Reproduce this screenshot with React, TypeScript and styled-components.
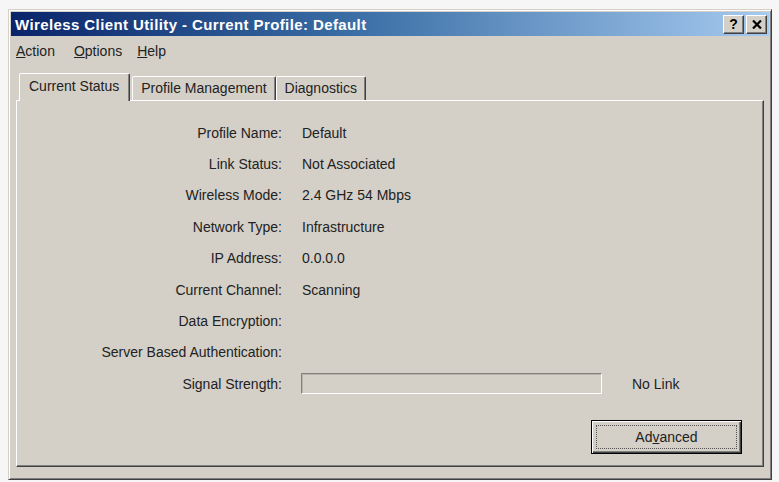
import React from 'react'
import styled, { createGlobalStyle, css } from 'styled-components'

const GlobalStyle = createGlobalStyle`
  html, body {
    margin: 0;
    padding: 0;
    background: #f6f6f6;
  }
  body {
    font-family: "Liberation Sans", Arial, sans-serif;
    font-size: 14px;
    color: #222;
  }
`

const face = '#d4d0c8'

const rows: { label: string; value?: string }[] = [
  { label: 'Profile Name:', value: 'Default' },
  { label: 'Link Status:', value: 'Not Associated' },
  { label: 'Wireless Mode:', value: '2.4 GHz 54 Mbps' },
  { label: 'Network Type:', value: 'Infrastructure' },
  { label: 'IP Address:', value: '0.0.0.0' },
  { label: 'Current Channel:', value: 'Scanning' },
  { label: 'Data Encryption:' },
  { label: 'Server Based Authentication:' }
]

const tabs = ['Current Status', 'Profile Management', 'Diagnostics']

const App: React.FC = () => {
  return (
    <>
      <GlobalStyle />
      <Window>
        <TitleBar>
          <Title>Wireless Client Utility - Current Profile: Default</Title>
          <CaptionButtons>
            <CaptionButton>?</CaptionButton>
            <CaptionButton>
              <svg width="10" height="9" viewBox="0 0 10 9">
                <path d="M1 0.5 L9 8.5 M9 0.5 L1 8.5" stroke="#000" strokeWidth="2.2" />
              </svg>
            </CaptionButton>
          </CaptionButtons>
        </TitleBar>

        <MenuBar>
          <MenuItem>
            <u>A</u>ction
          </MenuItem>
          <MenuItem>
            <u>O</u>ptions
          </MenuItem>
          <MenuItem>
            <u>H</u>elp
          </MenuItem>
        </MenuBar>

        <Body>
          <TabStrip>
            {tabs.map((t, i) => (
              <Tab key={t} $active={i === 0}>
                {t}
              </Tab>
            ))}
          </TabStrip>

          <TabPanel>
            <InfoGrid>
              {rows.map((r) => (
                <React.Fragment key={r.label}>
                  <Label>{r.label}</Label>
                  <Value>{r.value ?? ''}</Value>
                </React.Fragment>
              ))}
              <Label>Signal Strength:</Label>
              <SignalCell>
                <SignalBar />
                <SignalText>No Link</SignalText>
              </SignalCell>
            </InfoGrid>

            <ButtonRow>
              <DefaultButton>
                <FocusRect>
                  Ad<u>v</u>anced
                </FocusRect>
              </DefaultButton>
            </ButtonRow>
          </TabPanel>
        </Body>
      </Window>
    </>
  )
}

const Window = styled.div`
  box-sizing: border-box;
  margin: 9px 0 0 8px;
  width: 764px;
  height: 471px;
  background: ${face};
  border: 1px solid;
  border-color: ${face} #404040 #404040 ${face};
  box-shadow: inset 1px 1px 0 #fff, inset -1px -1px 0 #808080;
  padding: 2px;
  display: flex;
  flex-direction: column;
`

const TitleBar = styled.div`
  height: 24px;
  display: flex;
  align-items: center;
  justify-content: space-between;
  padding: 0 2px 0 4px;
  background: linear-gradient(to right, #0a246a 0%, #3a6ea5 45%, #a6caf0 100%);
`

const Title = styled.div`
  color: #fff;
  font-weight: bold;
  font-size: 15px;
  letter-spacing: 0.4px;
  white-space: nowrap;
`

const CaptionButtons = styled.div`
  display: flex;
  gap: 2px;
`

const CaptionButton = styled.div`
  box-sizing: border-box;
  width: 21px;
  height: 19px;
  display: flex;
  align-items: center;
  justify-content: center;
  background: ${face};
  border: 1px solid;
  border-color: #fff #404040 #404040 #fff;
  box-shadow: inset -1px -1px 0 #808080;
  font-weight: bold;
  font-size: 14px;
  color: #000;
  line-height: 1;
`

const MenuBar = styled.div`
  height: 26px;
  display: flex;
  align-items: flex-start;
  padding: 7px 0 0 5px;
  box-sizing: border-box;
  gap: 19px;
`

const MenuItem = styled.span`
  line-height: 16px;
  color: #222;
  &:last-child {
    margin-left: -4px;
  }
`

const Body = styled.div`
  flex: 1;
  display: flex;
  flex-direction: column;
  padding: 11px 5px 10px 5px;
`

const TabStrip = styled.div`
  display: flex;
  align-items: flex-end;
  padding-left: 3px;
  height: 27px;
  position: relative;
  z-index: 1;
`

const Tab = styled.div<{ $active?: boolean }>`
  box-sizing: border-box;
  height: 24px;
  line-height: 22px;
  padding: 0 8px;
  background: ${face};
  border: 1px solid;
  border-bottom: none;
  border-color: #fff #404040 transparent #fff;
  box-shadow: inset -1px 0 0 #808080;
  border-radius: 2px 2px 0 0;
  white-space: nowrap;
  ${({ $active }) =>
    $active &&
    css`
      height: 28px;
      line-height: 25px;
      margin-bottom: -1px;
      padding: 0 10px 0 9px;
      margin-right: 2px;
    `}
`

const TabPanel = styled.div`
  flex: 1;
  display: flex;
  flex-direction: column;
  box-sizing: border-box;
  border: 1px solid;
  border-color: #fff #404040 #404040 #fff;
  box-shadow: inset -1px -1px 0 #808080;
`

const InfoGrid = styled.div`
  display: grid;
  grid-template-columns: 265px 1fr;
  grid-auto-rows: 31.4px;
  column-gap: 20px;
  align-items: center;
  padding-top: 16px;
`

const Label = styled.div`
  text-align: right;
  white-space: nowrap;
`

const Value = styled.div`
  white-space: nowrap;
`

const SignalCell = styled.div`
  display: flex;
  align-items: center;
  margin-left: -1px;
`

const SignalBar = styled.div`
  box-sizing: border-box;
  width: 301px;
  height: 21px;
  border: 1px solid;
  border-color: #808080 #fff #fff #808080;
  box-shadow: inset 1px 1px 0 #b8b4ac;
`

const SignalText = styled.span`
  margin-left: 30px;
`

const ButtonRow = styled.div`
  display: flex;
  justify-content: flex-end;
  padding: 20px 21px 0 0;
`

const DefaultButton = styled.div`
  box-sizing: border-box;
  width: 151px;
  height: 34px;
  border: 1px solid #000;
  background: ${face};
  box-shadow: inset 1px 1px 0 #fff, inset -1px -1px 0 #404040, inset -2px -2px 0 #808080;
  padding: 4px;
  display: flex;
`

const FocusRect = styled.div`
  flex: 1;
  display: flex;
  align-items: center;
  justify-content: center;
  border: 1px dotted #555;
  color: #222;
`

export default App
